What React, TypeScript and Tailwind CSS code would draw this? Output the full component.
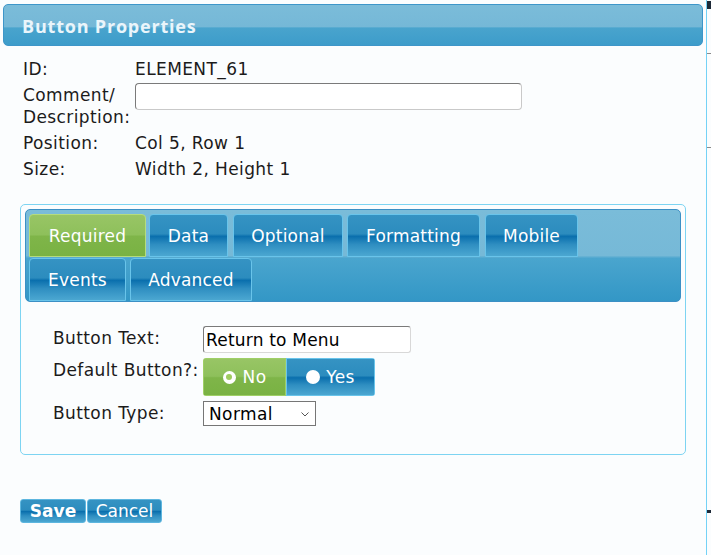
import { useState } from "react";

const tabsTop = [
  { label: "Required", w: "w-[117px]", ml: "ml-0" },
  { label: "Data", w: "w-[79px]", ml: "ml-[3px]" },
  { label: "Optional", w: "w-[110px]", ml: "ml-[5px]" },
  { label: "Formatting", w: "w-[133px]", ml: "ml-[4px]" },
  { label: "Mobile", w: "w-[93px]", ml: "ml-[5px]" },
];

const tabsBottom = [
  { label: "Events", w: "w-[97px]", ml: "ml-0" },
  { label: "Advanced", w: "w-[122px]", ml: "ml-[4px]" },
];

const blueGloss =
  "bg-[linear-gradient(to_bottom,#3593c3_0%,#2c8cbe_46%,#0a6fad_52%,#2f8ec1_72%,#4ba7d1_100%)]";
const greenGloss =
  "bg-[linear-gradient(to_bottom,#98c565_0%,#8ec05b_48%,#7fb549_52%,#79b243_100%)]";

function Tab({ label, w, ml, active }: { label: string; w: string; ml: string; active?: boolean }) {
  return (
    <div
      className={`${w} ${ml} h-[43px] pt-[3px] flex items-center justify-center rounded-t-[4px] border text-[17px] tracking-[0.2px] text-white ${
        active ? `${greenGloss} border-[#b5dc7e]` : `${blueGloss} border-[#69c4ea]`
      }`}
    >
      {label}
    </div>
  );
}

export default function App() {
  const [isDefault, setIsDefault] = useState(false);

  return (
    <div className="w-[711px] h-[555px] flex bg-[#fbfdfe] overflow-hidden text-[#1b1b1b] font-['DejaVu_Sans',Verdana,sans-serif]">
      <div className="w-[706px] flex flex-col">
        {/* header */}
        <div className="mt-[4px] ml-[3px] w-[700px] h-[42px] rounded-[5px] border border-[#3e96c9] bg-[linear-gradient(to_bottom,#7bbcd9_0%,#75b8d7_55%,#49a4cd_57%,#3d9cca_100%)] flex items-center pl-[18px] pt-[2px]">
          <span className="font-['Open_Sans',sans-serif] font-bold text-[18px] tracking-[0.8px] text-[#eaf5fb]">
            Button Properties
          </span>
        </div>

        {/* info */}
        <div className="mt-[12px] ml-[23px] grid grid-cols-[112px_auto] gap-y-[4px] text-[17px] tracking-[0.4px] leading-[22px]">
          <div>ID:</div>
          <div>ELEMENT_61</div>
          <div>
            Comment/
            <br />
            Description:
          </div>
          <div>
            <input
              type="text"
              className="-mt-px w-[387px] h-[27px] rounded-[4px] border border-[#c9c9c9] border-t-[#7a7a7a] border-l-[#7a7a7a] bg-white px-1 outline-none"
            />
          </div>
          <div>Position:</div>
          <div>Col 5, Row 1</div>
          <div>Size:</div>
          <div>Width 2, Height 1</div>
        </div>

        {/* tab box */}
        <div className="mt-[24px] ml-[20px] w-[666px] rounded-[5px] border border-[#7dd4f2] p-[4px]">
          <div className="rounded-[5px] border border-[#3b90c5] bg-[linear-gradient(to_bottom,#7abcd9_0%,#76b9d7_50%,#4aa5ce_53%,#3397c6_100%)] pt-[4px] pl-[3px] flex flex-col gap-[1px]">
            <div className="flex">
              {tabsTop.map((t, i) => (
                <Tab key={t.label} {...t} active={i === 0} />
              ))}
            </div>
            <div className="flex">
              {tabsBottom.map((t) => (
                <Tab key={t.label} {...t} />
              ))}
            </div>
          </div>

          <div className="pl-[28px] pt-[24px] pb-[24px] grid grid-cols-[150px_auto] gap-y-[5px] text-[17px] tracking-[0.4px] leading-[24px] items-start">
            <div>Button Text:</div>
            <input
              type="text"
              defaultValue="Return to Menu"
              className="w-[208px] h-[27px] rounded-[3px] border border-[#d8d8d8] border-t-[#7a7a7a] border-l-[#7a7a7a] bg-white pl-[2px] text-[17px] tracking-[0.2px] text-black outline-none"
            />

            <div>Default Button?:</div>
            <div className="flex h-[38px] w-[172px] rounded-[3px] overflow-hidden text-[17px] text-white">
              <button
                onClick={() => setIsDefault(false)}
                className={`w-[83px] flex items-center justify-center gap-[7px] border ${
                  !isDefault ? `${greenGloss} border-[#9fcf66]` : `${blueGloss} border-[#69c4ea]`
                }`}
              >
                <span className="w-[13px] h-[13px] rounded-full bg-white flex items-center justify-center">
                  {!isDefault && <span className="w-[6px] h-[6px] rounded-full bg-[#9fcb5f]" />}
                </span>
                No
              </button>
              <button
                onClick={() => setIsDefault(true)}
                className={`flex-1 flex items-center justify-center gap-[6px] border ${
                  isDefault ? `${greenGloss} border-[#9fcf66]` : `${blueGloss} border-[#69c4ea]`
                }`}
              >
                <span className="w-[14px] h-[14px] rounded-full bg-white flex items-center justify-center">
                  {isDefault && <span className="w-[6px] h-[6px] rounded-full bg-[#9fcb5f]" />}
                </span>
                Yes
              </button>
            </div>

            <div>Button Type:</div>
            <div className="relative w-[113px] h-[25px] border border-[#767676] bg-white flex items-center pl-[5px] text-[17px] text-black">
              Normal
              <svg
                className="absolute right-[6px] top-[10px]"
                width="8"
                height="5"
                viewBox="0 0 8 5"
                fill="none"
                stroke="#555"
                strokeWidth="1"
              >
                <path d="M0.5 0.5 L4 4 L7.5 0.5" />
              </svg>
            </div>
          </div>
        </div>

        {/* actions */}
        <div className="mt-[44px] ml-[20px] flex gap-[1px]">
          <button
            className={`w-[66px] h-[24px] rounded-[3px] border border-[#5db6df] ${blueGloss} text-white font-bold text-[17px] leading-none`}
          >
            Save
          </button>
          <button
            className={`w-[75px] h-[24px] rounded-[3px] border border-[#5db6df] ${blueGloss} text-white text-[17px] leading-none`}
          >
            Cancel
          </button>
        </div>
      </div>

      {/* neighbouring pane edge */}
      <div className="w-px h-full bg-[#74d2f6]" />
      <div className="flex-1 flex flex-col">
        <div className="mt-[1px] h-[8px] bg-[#1e2a38]" />
        <div className="mt-[44px] h-px bg-[#8a8a8a]" />
        <div className="mt-[93px] h-px bg-[#8a8a8a]" />
        <div className="mt-[362px] h-[3px] bg-[#1e2a38]" />
      </div>
    </div>
  );
}
